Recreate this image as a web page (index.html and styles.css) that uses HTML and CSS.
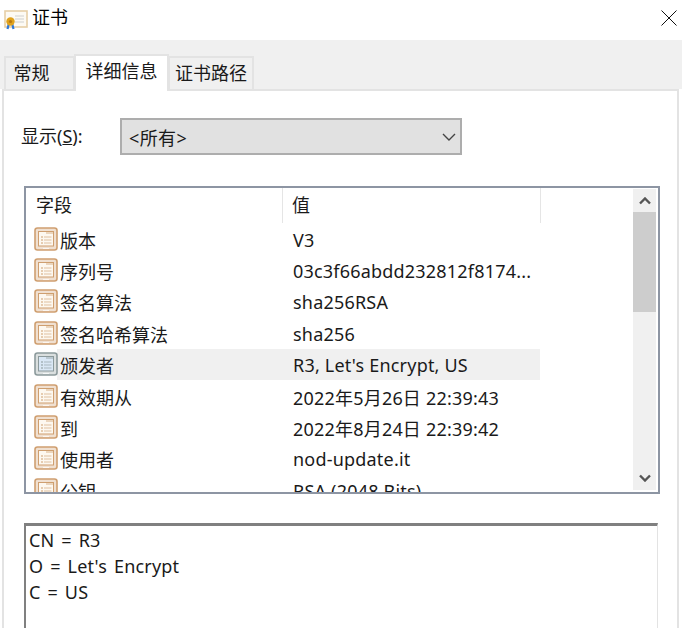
FILE: index.html
```html
<!DOCTYPE html>
<html lang="zh-CN">
  <head>
    <meta charset="UTF-8" />
    <title>证书</title>
    <link rel="stylesheet" href="styles.css">
  </head>

  <body>
    <svg class="defs" width="0" height="0">
      <symbol id="field" viewBox="0 0 24 24">
        <rect x="1" y="1" width="22" height="22" rx="2.5" fill="currentColor" fill-opacity="0.32" stroke="currentColor" stroke-width="1.6" />
        <rect x="4.5" y="4.5" width="15" height="14.5" fill="var(--page)" stroke="currentColor" stroke-width="1" />
        <path d="M12 4.5h7.5v2.5h-7.5z" fill="currentColor" fill-opacity="0.4" />
        <path d="M7 10h2M7 13h2M7 16h2" stroke="currentColor" stroke-width="1.2" />
        <path d="M10 10h7.5M10 13h7.5M10 16h7.5" stroke="currentColor" stroke-width="1.2" stroke-opacity="0.6" />
        <path d="M9 21.5h6" stroke="#fff" stroke-width="1" stroke-opacity="0.7" />
      </symbol>
    </svg>

    <div class="dialog">
      <div class="titlebar">
        <svg class="cert-icon" width="24" height="20" viewBox="0 0 24 20">
          <rect x="1" y="1" width="22" height="16" fill="#fdfaf3" stroke="#e6cfa6" stroke-width="1.6" />
          <path d="M11 6h9M11 9h9M11 12h9" stroke="#cfcfcf" stroke-width="1.2" />
          <path d="M5 13l-1.5 6M8 13l1.5 6" stroke="#2f78d8" stroke-width="2.2" />
          <circle cx="6.5" cy="11.5" r="4.2" fill="#e0a21c" />
          <circle cx="6.5" cy="11.5" r="1.6" fill="#b9790f" />
        </svg>
        <span class="title">证书</span>
        <svg class="close" width="16" height="16" viewBox="0 0 16 16">
          <path d="M0.5 0.5l15 15M15.5 0.5l-15 15" stroke="#111" stroke-width="1" fill="none" />
        </svg>
      </div>

      <div class="tabs">
        <div class="tab tab-first">常规</div>
        <div class="tab active">详细信息</div>
        <div class="tab tab-last">证书路径</div>
      </div>

      <div class="panel">
        <div class="show-row">
          <label class="show-label">显示(<u>S</u>):</label>
          <div class="select">
            <span>&lt;所有&gt;</span>
            <svg width="14" height="8" viewBox="0 0 14 8">
              <path d="M1 1l6 6 6-6" stroke="#444" stroke-width="1.4" fill="none" />
            </svg>
          </div>
        </div>

        <div class="list">
          <div class="list-main">
            <div class="list-head">
              <div class="col-name">字段</div>
              <div class="col-value">值</div>
            </div>
            <div class="list-body">
              <div class="row">
                <svg class="ficon"><use href="#field" /></svg>
                <div class="name">版本</div>
                <div class="value">V3</div>
              </div>
              <div class="row">
                <svg class="ficon"><use href="#field" /></svg>
                <div class="name">序列号</div>
                <div class="value">03c3f66abdd232812f8174...</div>
              </div>
              <div class="row">
                <svg class="ficon"><use href="#field" /></svg>
                <div class="name">签名算法</div>
                <div class="value">sha256RSA</div>
              </div>
              <div class="row">
                <svg class="ficon"><use href="#field" /></svg>
                <div class="name">签名哈希算法</div>
                <div class="value">sha256</div>
              </div>
              <div class="row selected">
                <svg class="ficon"><use href="#field" /></svg>
                <div class="name">颁发者</div>
                <div class="value">R3, Let's Encrypt, US</div>
              </div>
              <div class="row">
                <svg class="ficon"><use href="#field" /></svg>
                <div class="name">有效期从</div>
                <div class="value">2022年5月26日 22:39:43</div>
              </div>
              <div class="row">
                <svg class="ficon"><use href="#field" /></svg>
                <div class="name">到</div>
                <div class="value">2022年8月24日 22:39:42</div>
              </div>
              <div class="row">
                <svg class="ficon"><use href="#field" /></svg>
                <div class="name">使用者</div>
                <div class="value">nod-update.it</div>
              </div>
              <div class="row">
                <svg class="ficon"><use href="#field" /></svg>
                <div class="name">公钥</div>
                <div class="value">RSA (2048 Bits)</div>
              </div>
            </div>
          </div>
          <div class="scrollbar">
            <svg class="arrow" width="12" height="8" viewBox="0 0 12 8">
              <path d="M1 6.5l5-5 5 5" stroke="#555" stroke-width="2.4" fill="none" />
            </svg>
            <div class="thumb"></div>
            <div class="track"></div>
            <svg class="arrow" width="12" height="8" viewBox="0 0 12 8">
              <path d="M1 1.5l5 5 5-5" stroke="#555" stroke-width="2.4" fill="none" />
            </svg>
          </div>
        </div>

        <div class="detail">
          <div>CN = R3</div>
          <div>O = Let's Encrypt</div>
          <div>C = US</div>
        </div>
      </div>
    </div>
  </body>
</html>
```

FILE: styles.css
```css
* {
  box-sizing: border-box;
  padding: 0;
  margin: 0;
}

html,
body {
  height: 628px;
  overflow: hidden;
  background: #fff;
}

body {
  font-family: "Noto Sans", "Noto Sans CJK SC", sans-serif;
  font-size: 18px;
  color: #1a1a1a;
}

.defs {
  display: block;
  height: 0;
}

.dialog {
  width: 682px;
  height: 628px;
  overflow: hidden;
}

.titlebar {
  height: 40px;
  display: flex;
  align-items: center;
  padding: 0 5px 5px 4px;
}

.cert-icon {
  margin-top: 4px;
}

.title {
  margin-left: 4px;
  margin-bottom: 3px;
  color: #000;
}

.close {
  margin-left: auto;
  margin-top: 1px;
}

.tabs {
  height: 49px;
  background: #f0f0f0;
  display: flex;
  align-items: flex-end;
  padding-left: 4px;
}

.tab {
  height: 33px;
  border: 2px solid #e3e3e3;
  border-bottom: none;
  display: flex;
  align-items: center;
  justify-content: center;
  padding-bottom: 3px;
}

.tab-first {
  width: 71px;
  padding-right: 16px;
}

.active {
  width: 95px;
  height: 37px;
  background: #fff;
  margin-left: -1px;
  margin-bottom: -2px;
  padding-bottom: 7px;
}

.tab-last {
  width: 86px;
  margin-left: -1px;
}

.panel {
  width: 677px;
  height: 539px;
  margin-left: 2px;
  border: 2px solid #e3e3e3;
  border-bottom: none;
  padding: 27px 0 0 20px;
  background: #fff;
}

.show-row {
  display: flex;
  align-items: center;
  margin-left: -3px;
}

.show-label {
  width: 99px;
  padding-bottom: 3px;
}

.select {
  width: 342px;
  height: 37px;
  background: #e1e1e1;
  border: 2px solid #adadad;
  display: flex;
  align-items: center;
  justify-content: space-between;
  padding: 0 4px 0 7px;
  letter-spacing: 0.4px;
}

.list {
  width: 636px;
  height: 308px;
  margin-top: 31px;
  border: 2px solid #8d95a3;
  display: flex;
}

.list-main {
  width: 607px;
  overflow: hidden;
}

.list-head {
  height: 35px;
  display: flex;
  align-items: center;
}

.col-name {
  width: 257px;
  height: 35px;
  line-height: 35px;
  padding-left: 10px;
  border-right: 1px solid #e5e5e5;
}

.col-value {
  width: 258px;
  height: 35px;
  line-height: 35px;
  padding-left: 9px;
  border-right: 1px solid #e5e5e5;
}

.list-body {
  height: 269px;
  overflow: hidden;
}

.row {
  --page: #fdf8f0;
  width: 514px;
  height: 31.4px;
  display: flex;
  align-items: center;
  padding-left: 8px;
}

.ficon {
  width: 24px;
  height: 24px;
  flex-shrink: 0;
  color: #cf9f70;
}

.name {
  width: 235px;
  padding-left: 2px;
  padding-top: 2px;
}

.value {
  white-space: nowrap;
  letter-spacing: 0.2px;
  padding-top: 2px;
}

.selected {
  --page: #d9e7f5;
  background: linear-gradient(to right, #fff 31px, #f0f0f0 31px);
}

.selected .ficon {
  color: #8c9a9c;
}

.scrollbar {
  width: 23px;
  margin: 1px 0 2px 0;
  background: #f0f0f0;
  display: flex;
  flex-direction: column;
  align-items: center;
}

.arrow {
  flex-shrink: 0;
  margin: 8px 0;
}

.thumb {
  width: 23px;
  height: 100px;
  background: #cdcdcd;
  margin-top: -1px;
}

.track {
  flex: 1;
}

.detail {
  width: 634px;
  height: 110px;
  margin-top: 29px;
  border-top: 3px solid #808080;
  border-left: 2px solid #808080;
  border-right: 1px solid #e3e3e3;
  padding: 1px 0 0 3px;
  line-height: 26px;
  letter-spacing: 0.2px;
  word-spacing: 2px;
}
```
